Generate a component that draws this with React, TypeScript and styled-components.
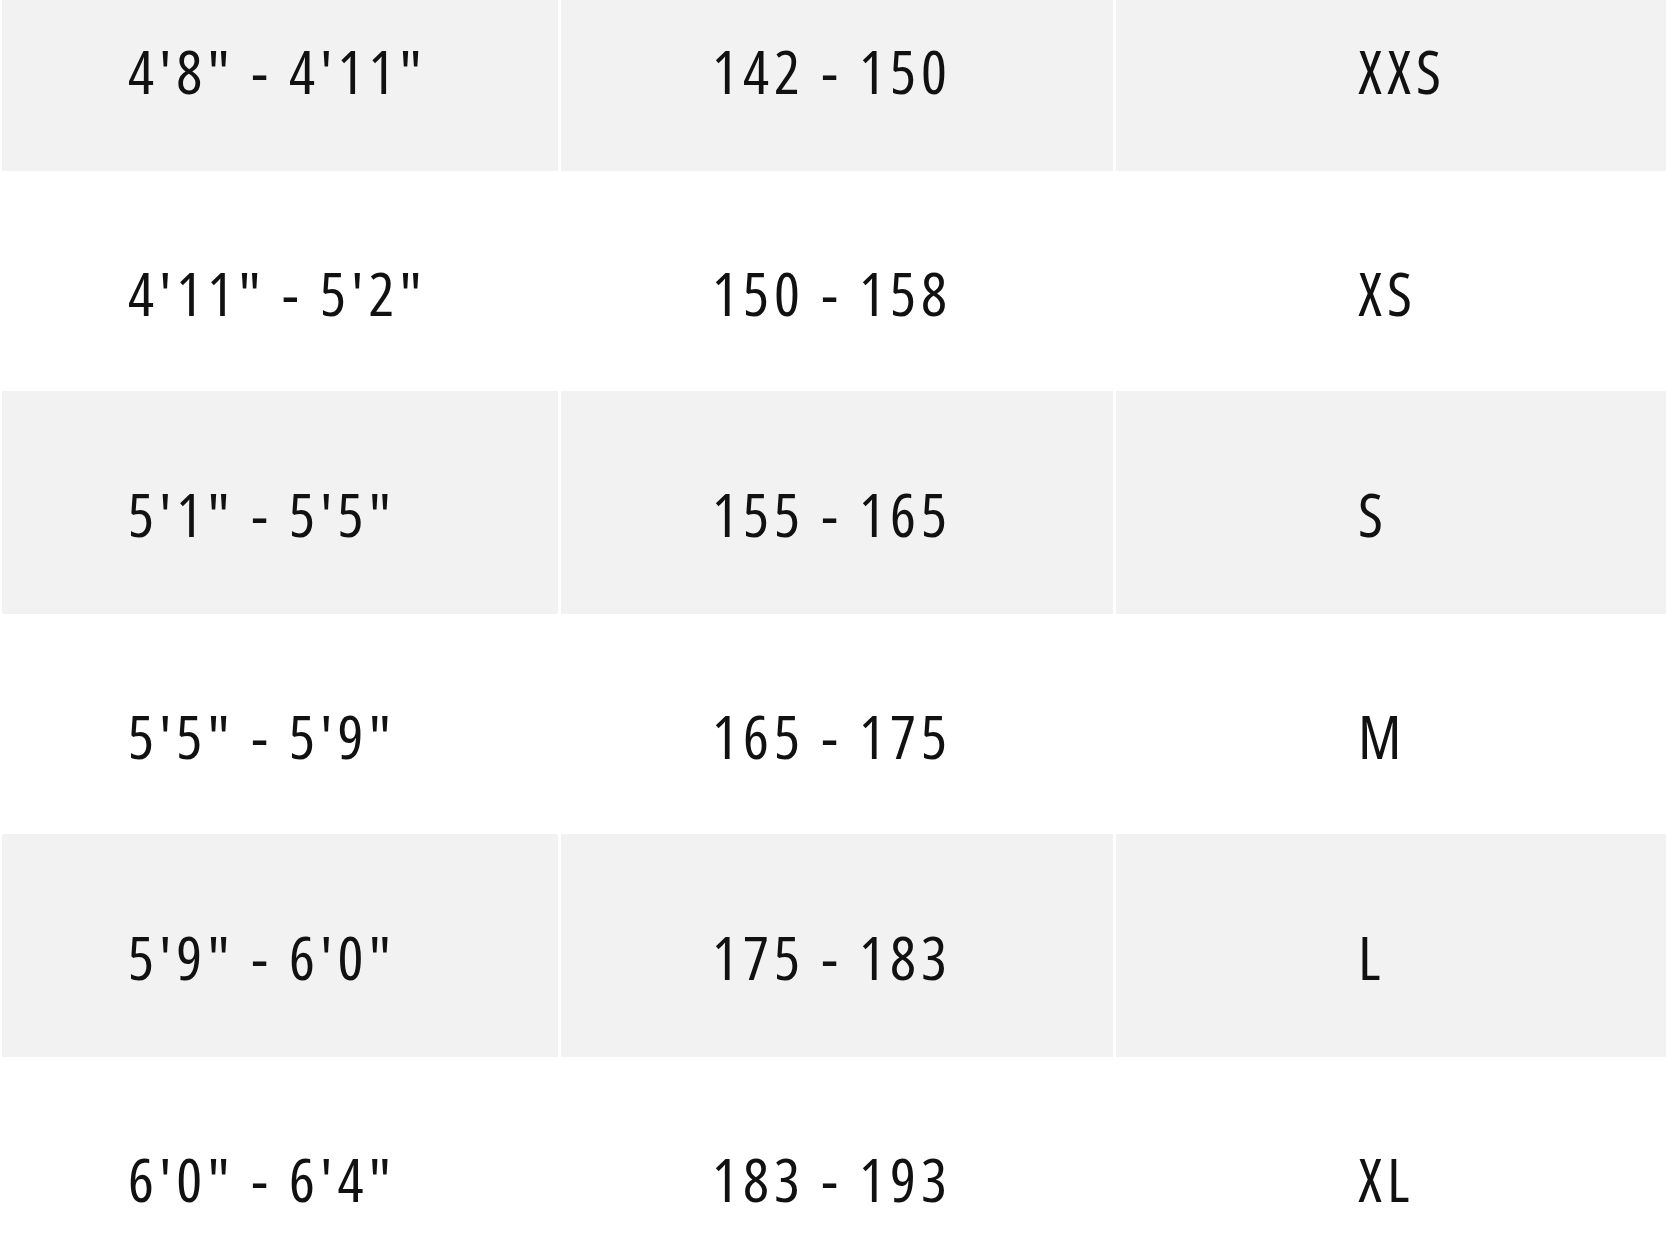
import React from 'react';
import styled, { createGlobalStyle } from 'styled-components';

const GlobalStyle = createGlobalStyle`
  html, body {
    margin: 0;
    padding: 0;
    background: #fff;
    overflow: hidden;
  }
`;

const Page = styled.div`
  width: 1666px;
  height: 1249px;
  overflow: hidden;
  background: #fff;
`;

const Table = styled.div`
  display: flex;
  flex-direction: column;
  margin-top: -52px;
  padding-left: 2px;
`;

const Row = styled.div<{ $shaded: boolean }>`
  display: grid;
  grid-template-columns: 556px 552px 1fr;
  column-gap: 3px;
  height: ${(p) => (p.$shaded ? 223 : 220)}px;
`;

const Cell = styled.div<{ $shaded: boolean; $indent: number }>`
  display: flex;
  align-items: center;
  padding-left: ${(p) => p.$indent}px;
  padding-top: 22px;
  box-sizing: border-box;
  background: ${(p) => (p.$shaded ? '#f2f2f2' : '#fff')};
  font-family: 'Open Sans', 'DejaVu Sans Condensed', sans-serif;
  font-stretch: 75%;
  font-weight: 500;
  font-size: 61px;
  line-height: 1;
  letter-spacing: 5px;
  color: #111;
  white-space: nowrap;
`;

const rows = [
  ['4\'8" - 4\'11"', '142 - 150', 'XXS'],
  ['4\'11" - 5\'2"', '150 - 158', 'XS'],
  ['5\'1" - 5\'5"', '155 - 165', 'S'],
  ['5\'5" - 5\'9"', '165 - 175', 'M'],
  ['5\'9" - 6\'0"', '175 - 183', 'L'],
  ['6\'0" - 6\'4"', '183 - 193', 'XL'],
];

const indents = [126, 151, 242];

export default function App() {
  return (
    <Page>
      <GlobalStyle />
      <Table>
        {rows.map((row, i) => (
          <Row key={i} $shaded={i % 2 === 0}>
            {row.map((text, j) => (
              <Cell key={j} $shaded={i % 2 === 0} $indent={indents[j]}>
                {text}
              </Cell>
            ))}
          </Row>
        ))}
      </Table>
    </Page>
  );
}
